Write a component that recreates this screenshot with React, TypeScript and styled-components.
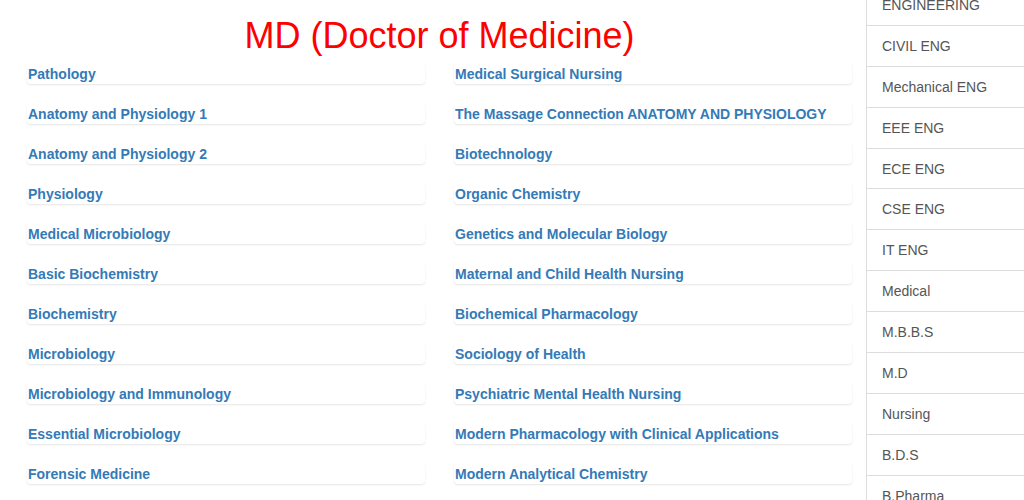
import styled, { createGlobalStyle } from 'styled-components';

const GlobalStyle = createGlobalStyle`
  html, body {
    margin: 0;
    padding: 0;
    background: #fff;
    overflow: hidden;
    font-family: "Liberation Sans", Arial, sans-serif;
  }
`;

const Page = styled.div`
  display: flex;
  width: 1024px;
  height: 500px;
  overflow: hidden;
`;

const Main = styled.main`
  flex: 1;
  padding: 16px 14px 0 27px;
`;

const Title = styled.h1`
  margin: 0 0 7px;
  font-size: 36px;
  line-height: 40px;
  font-weight: normal;
  color: #ff0000;
  text-align: center;
`;

const Grid = styled.div`
  display: grid;
  grid-template-columns: 1fr 1fr;
  column-gap: 29px;
  row-gap: 19px;
`;

const Book = styled.a`
  display: block;
  box-sizing: border-box;
  height: 21px;
  padding: 1px 0 0 1px;
  line-height: 20px;
  border-radius: 4px;
  background: #fff;
  box-shadow: 0 1px 2px rgba(0, 0, 0, 0.1);
  color: #337ab7;
  font-size: 14px;
  font-weight: bold;
  text-decoration: none;
  white-space: nowrap;
`;

const Aside = styled.aside`
  width: 157px;
  flex-shrink: 0;
  border-left: 1px solid #ddd;
  margin-top: -15px;
`;

const NavItem = styled.a`
  display: flex;
  align-items: center;
  height: 39.9px;
  padding: 0 15px;
  border-bottom: 1px solid #ddd;
  color: #555;
  font-size: 14px;
  text-decoration: none;
`;

const left = [
  'Pathology',
  'Anatomy and Physiology 1',
  'Anatomy and Physiology 2',
  'Physiology',
  'Medical Microbiology',
  'Basic Biochemistry',
  'Biochemistry',
  'Microbiology',
  'Microbiology and Immunology',
  'Essential Microbiology',
  'Forensic Medicine',
];

const right = [
  'Medical Surgical Nursing',
  'The Massage Connection ANATOMY AND PHYSIOLOGY',
  'Biotechnology',
  'Organic Chemistry',
  'Genetics and Molecular Biology',
  'Maternal and Child Health Nursing',
  'Biochemical Pharmacology',
  'Sociology of Health',
  'Psychiatric Mental Health Nursing',
  'Modern Pharmacology with Clinical Applications',
  'Modern Analytical Chemistry',
];

const nav = [
  'ENGINEERING',
  'CIVIL ENG',
  'Mechanical ENG',
  'EEE ENG',
  'ECE ENG',
  'CSE ENG',
  'IT ENG',
  'Medical',
  'M.B.B.S',
  'M.D',
  'Nursing',
  'B.D.S',
  'B.Pharma',
];

// books laid out row by row: left column then right column
const books = left.flatMap((name, i) => [name, right[i]]);

function App() {
  return (
    <>
      <GlobalStyle />
      <Page>
        <Main>
          <Title>MD (Doctor of Medicine)</Title>
          <Grid>
            {books.map((name, i) => (
              <Book key={i} href="#">{name}</Book>
            ))}
          </Grid>
        </Main>
        <Aside>
          {nav.map(item => (
            <NavItem key={item} href="#">{item}</NavItem>
          ))}
        </Aside>
      </Page>
    </>
  );
}

export default App;
